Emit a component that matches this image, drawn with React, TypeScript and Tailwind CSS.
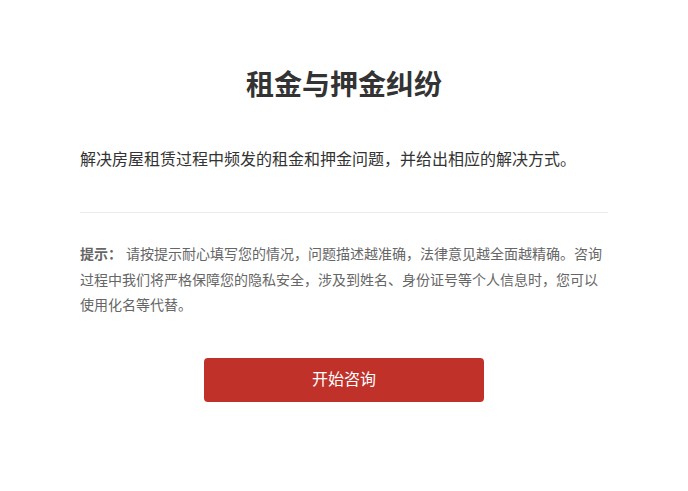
export default function App() {
  return (
    <div className="min-h-[491px] bg-white font-['Liberation_Sans','Noto_Sans_CJK_SC',sans-serif]">
      <div className="mx-auto w-[528px] pt-[66px]">
        <h1 className="text-center text-[28px] font-bold leading-[40px] text-[#333]">
          租金与押金纠纷
        </h1>
        <p className="mt-[42px] text-[16px] leading-[24px] text-[#333]">
          解决房屋租赁过程中频发的租金和押金问题，并给出相应的解决方式。
        </p>
        <div className="mt-[40px] h-px bg-[#ebebeb]" />
        <p className="mt-[29px] text-[14px] leading-[25.5px] text-[#666]">
          <b className="font-bold">提示：</b> 请按提示耐心填写您的情况，问题描述越准确，法律意见越全面越精确。咨询过程中我们将严格保障您的隐私安全，涉及到姓名、身份证号等个人信息时，您可以使用化名等代替。
        </p>
        <div className="mt-[39px] flex justify-center">
          <button className="h-[44px] w-[280px] rounded-[4px] bg-[#c0312a] text-[16px] text-white">
            开始咨询
          </button>
        </div>
      </div>
    </div>
  );
}
